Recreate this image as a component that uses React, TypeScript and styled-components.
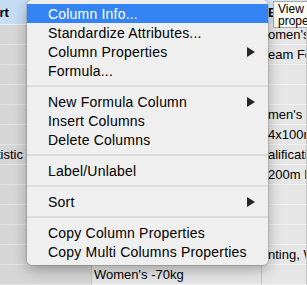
import { Fragment } from "react";
import styled, { createGlobalStyle } from "styled-components";

const GlobalStyle = createGlobalStyle`
  html, body {
    margin: 0;
    padding: 0;
    overflow: hidden;
  }
  body {
    font-family: "Liberation Sans", Arial, sans-serif;
    color: #000;
  }
`;

const Screen = styled.div`
  position: relative;
  width: 307px;
  height: 285px;
  overflow: hidden;
  background: #e6e6e6;
`;

// data table behind the menu
const Table = styled.div`
  display: grid;
  grid-template-columns: 152px 170px 45px;
  margin-left: -60px;
  width: 367px;
`;

const HeaderCell = styled.div<{ $pad: number; $selected?: boolean }>`
  height: 25px;
  box-sizing: border-box;
  padding-left: ${(p) => p.$pad}px;
  display: flex;
  align-items: center;
  background: ${(p) => (p.$selected ? "#c6dcf4" : "#d3e3f6")};
  border-bottom: 1px solid #e9eef5;
  border-right: 1px solid #c4c4c4;
  font-size: 13px;
  font-weight: bold;
  white-space: nowrap;
  overflow: hidden;
`;

const Cell = styled.div<{ $pad: number; $selected?: boolean }>`
  height: 20px;
  box-sizing: border-box;
  padding-left: ${(p) => p.$pad}px;
  display: flex;
  align-items: center;
  background: ${(p) => (p.$selected ? "#d6d6d6" : "#e6e6e6")};
  border-bottom: 1px solid ${(p) => (p.$selected ? "#e4e4e4" : "#f2f2f2")};
  border-right: 1px solid #c4c4c4;
  font-size: 13px;
  white-space: nowrap;
  overflow: hidden;
`;

// popup menu
const Menu = styled.div`
  position: absolute;
  left: 27px;
  top: 0;
  width: 241px;
  padding: 4px 0;
  box-sizing: border-box;
  background: #efefef;
  border-radius: 5px;
  box-shadow: 0 0 0 1px rgba(0, 0, 0, 0.12), 0 5px 14px rgba(0, 0, 0, 0.3);
  overflow: hidden;
`;

const Item = styled.div<{ $active?: boolean }>`
  height: 19px;
  padding: 0 13px 0 21px;
  display: flex;
  align-items: center;
  justify-content: space-between;
  font-size: 14px;
  letter-spacing: 0.2px;
  color: ${(p) => (p.$active ? "#fff" : "#000")};
  background: ${(p) => (p.$active ? "#3584f6" : "transparent")};
  white-space: nowrap;
`;

const Separator = styled.div`
  height: 12px;
  display: flex;
  align-items: center;
  &::after {
    content: "";
    flex: 1;
    height: 2px;
    background: #dcdcdc;
  }
`;

const Tooltip = styled.div`
  position: absolute;
  left: 273px;
  top: 1px;
  width: 90px;
  height: 27px;
  box-sizing: border-box;
  padding: 1px 4px;
  background: #fbfbf1;
  border: 1px solid #a9a9a9;
  font-size: 12px;
  line-height: 12px;
`;

const Arrow = () => (
  <svg width="8" height="10" viewBox="0 0 8 10">
    <path d="M0 0 L8 5 L0 10 Z" fill="#262626" />
  </svg>
);

type Entry = { label: string; sub?: boolean; active?: boolean } | "sep";

const entries: Entry[] = [
  { label: "Column Info...", active: true },
  { label: "Standardize Attributes..." },
  { label: "Column Properties", sub: true },
  { label: "Formula..." },
  "sep",
  { label: "New Formula Column", sub: true },
  { label: "Insert Columns" },
  { label: "Delete Columns" },
  "sep",
  { label: "Label/Unlabel" },
  "sep",
  { label: "Sort", sub: true },
  "sep",
  { label: "Copy Column Properties" },
  { label: "Copy Multi Columns Properties" },
];

// only the parts of the table that show around the menu
const rows: [string, string, string][] = [
  ["", "", "omen's Sabre"],
  ["", "", "eam Foil"],
  ["", "", ""],
  ["", "", ""],
  ["", "", "men's & Women's"],
  ["", "", "4x100m Relay"],
  ["Artistic", "", "alification"],
  ["", "", "200m Free"],
  ["", "", ""],
  ["", "", ""],
  ["", "", ""],
  ["", "", "nting, Women's"],
  ["", "Women's -70kg", ""],
];

export default function App() {
  return (
    <Screen>
      <GlobalStyle />
      <Table>
        <HeaderCell $pad={35} $selected>Sport</HeaderCell>
        <HeaderCell $pad={2} />
        <HeaderCell $pad={6}>Event</HeaderCell>
        {rows.map((r, i) => (
          <Fragment key={i}>
            <Cell $pad={44} $selected>{r[0]}</Cell>
            <Cell $pad={2}>{r[1]}</Cell>
            <Cell $pad={6}>{r[2]}</Cell>
          </Fragment>
        ))}
      </Table>
      <Tooltip>View column properties</Tooltip>
      <Menu>
        {entries.map((e, i) =>
          e === "sep" ? (
            <Separator key={i} />
          ) : (
            <Item key={i} $active={e.active}>
              <span>{e.label}</span>
              {e.sub && <Arrow />}
            </Item>
          )
        )}
      </Menu>
    </Screen>
  );
}
